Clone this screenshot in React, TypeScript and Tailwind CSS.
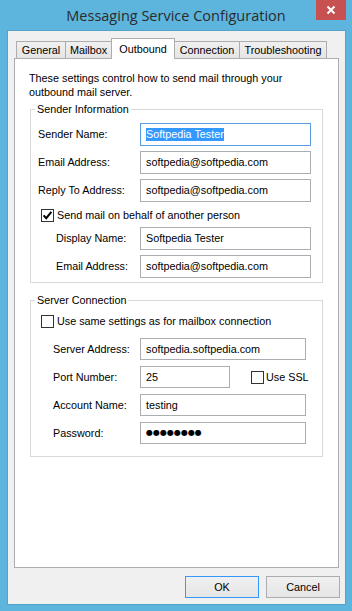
import React from "react";

function Check({ checked }: { checked?: boolean }) {
  return (
    <span className="w-[13px] h-[13px] border border-[#333333] bg-white flex items-center justify-center shrink-0">
      {checked && (
        <svg width="11" height="11" viewBox="0 0 11 11">
          <path d="M1.6 5.4 L4.2 8.2 L9.4 1.8" stroke="#000" strokeWidth="2" fill="none" />
        </svg>
      )}
    </span>
  );
}

function Input({
  w,
  h = "h-[23px]",
  children,
  focused,
}: {
  w: string;
  h?: string;
  children?: React.ReactNode;
  focused?: boolean;
}) {
  return (
    <div
      className={`${w} ${h} border ${focused ? "border-[#569de5]" : "border-[#abadb3]"} bg-white flex items-center pl-[5px] text-black whitespace-nowrap`}
    >
      {children}
    </div>
  );
}

function Row({
  label,
  lw,
  children,
}: {
  label: string;
  lw: string;
  children: React.ReactNode;
}) {
  return (
    <div className="flex items-center">
      <span className={`${lw} shrink-0`}>{label}</span>
      {children}
    </div>
  );
}

function Tab({ label, w, selected, first }: { label: string; w: string; selected?: boolean; first?: boolean }) {
  if (selected) {
    return (
      <div
        className={`${w} h-[21px] -mb-px -ml-px relative z-10 bg-white border-t border-l border-r border-[#adadad] flex items-center justify-center`}
      >
        {label}
      </div>
    );
  }
  return (
    <div
      className={`${w} h-[17px] ${first ? "" : "-ml-px"} bg-gradient-to-b from-[#f0f0f0] to-[#e5e5e5] border-t border-l border-r border-[#adadad] flex items-center justify-center pt-[1px]`}
    >
      {label}
    </div>
  );
}

export default function App() {
  return (
    <div className="w-[352px] h-[611px] bg-[#5db5de] flex flex-col font-['Liberation_Sans',Arial,sans-serif] text-[10.8px] text-black">
      <div className="h-[30px] shrink-0 relative flex items-center justify-center">
        <span className="font-['Open_Sans',sans-serif] text-[14.5px] text-[#2b2b2b] mt-[2px]">
          Messaging Service Configuration
        </span>
        <div className="absolute right-[6px] top-0 w-[30px] h-[20px] bg-[#c75050] flex items-center justify-center">
          <svg width="10" height="10" viewBox="0 0 10 10">
            <path d="M1.5 1.5 L8.5 8.5 M8.5 1.5 L1.5 8.5" stroke="#fff" strokeWidth="2" />
          </svg>
        </div>
      </div>
      <div className="flex-1 ml-[7px] mr-[6px] mb-[6px] bg-[#f0f0f0] border border-[#52a3cc] flex flex-col pl-[6px] pr-[6px] pt-[7px]">
        <div className="h-[20px] flex items-end pl-[2px]">
          <Tab label="General" w="w-[50px]" first />
          <Tab label="Mailbox" w="w-[47px]" />
          <Tab label="Outbound" w="w-[64px]" selected />
          <Tab label="Connection" w="w-[66px]" />
          <Tab label="Troubleshooting" w="w-[88px]" />
        </div>
        <div className="h-[510px] border border-[#adadad] bg-white flex flex-col">
          <p className="pl-[14px] pt-[12px] leading-[14px]">
            These settings control how to send mail through your
            <br />
            outbound mail server.
          </p>
          <fieldset className="mx-[15px] mt-[3px] border border-[#d9d9d9] pb-[4px]">
            <legend className="ml-[4px] px-[2px] leading-[14px]">Sender Information</legend>
            <div className="flex flex-col pl-[7px] pt-[7px]">
              <div className="flex flex-col gap-[5px]">
                <Row label="Sender Name:" lw="w-[102px]">
                  <Input w="w-[171px]" focused>
                    <span className="bg-[#3399ff] text-white leading-[13px]">Softpedia Tester</span>
                  </Input>
                </Row>
                <Row label="Email Address:" lw="w-[102px]">
                  <Input w="w-[171px]">softpedia@softpedia.com</Input>
                </Row>
                <Row label="Reply To Address:" lw="w-[102px]">
                  <Input w="w-[171px]">softpedia@softpedia.com</Input>
                </Row>
              </div>
              <label className="flex items-center gap-[3px] pl-[3px] mt-[7px] h-[13px]">
                <Check checked />
                <span>Send mail on behalf of another person</span>
              </label>
              <div className="flex flex-col gap-[5px] mt-[5px] pl-[18px]">
                <Row label="Display Name:" lw="w-[84px]">
                  <Input w="w-[171px]">Softpedia Tester</Input>
                </Row>
                <Row label="Email Address:" lw="w-[84px]">
                  <Input w="w-[171px]">softpedia@softpedia.com</Input>
                </Row>
              </div>
            </div>
          </fieldset>
          <fieldset className="mx-[15px] mt-[10px] border border-[#d9d9d9] pb-[12px]">
            <legend className="ml-[4px] px-[2px] leading-[14px]">Server Connection</legend>
            <div className="flex flex-col pl-[10px] pt-[8px]">
              <label className="flex items-center gap-[3px] h-[13px]">
                <Check />
                <span>Use same settings as for mailbox connection</span>
              </label>
              <div className="flex flex-col gap-[6px] mt-[10px] pl-[12px]">
                <Row label="Server Address:" lw="w-[87px]">
                  <Input w="w-[166px]" h="h-[22px]">softpedia.softpedia.com</Input>
                </Row>
                <Row label="Port Number:" lw="w-[87px]">
                  <Input w="w-[90px]" h="h-[22px]">25</Input>
                  <label className="flex items-center gap-[2px] ml-[21px]">
                    <Check />
                    <span>Use SSL</span>
                  </label>
                </Row>
                <Row label="Account Name:" lw="w-[87px]">
                  <Input w="w-[166px]" h="h-[22px]">testing</Input>
                </Row>
                <Row label="Password:" lw="w-[87px]">
                  <Input w="w-[166px]" h="h-[22px]">
                    <span className="font-['DejaVu_Sans',sans-serif] text-[8px]">●●●●●●●●</span>
                  </Input>
                </Row>
              </div>
            </div>
          </fieldset>
        </div>
        <div className="flex justify-end gap-[7px] mt-[8px] -mr-px">
          <button className="w-[74px] h-[22px] border border-[#3399ff] bg-gradient-to-b from-[#f0f0f0] to-[#e5e5e5] text-black">
            OK
          </button>
          <button className="w-[74px] h-[22px] border border-[#acacac] bg-gradient-to-b from-[#f0f0f0] to-[#e5e5e5] text-black">
            Cancel
          </button>
        </div>
      </div>
    </div>
  );
}
